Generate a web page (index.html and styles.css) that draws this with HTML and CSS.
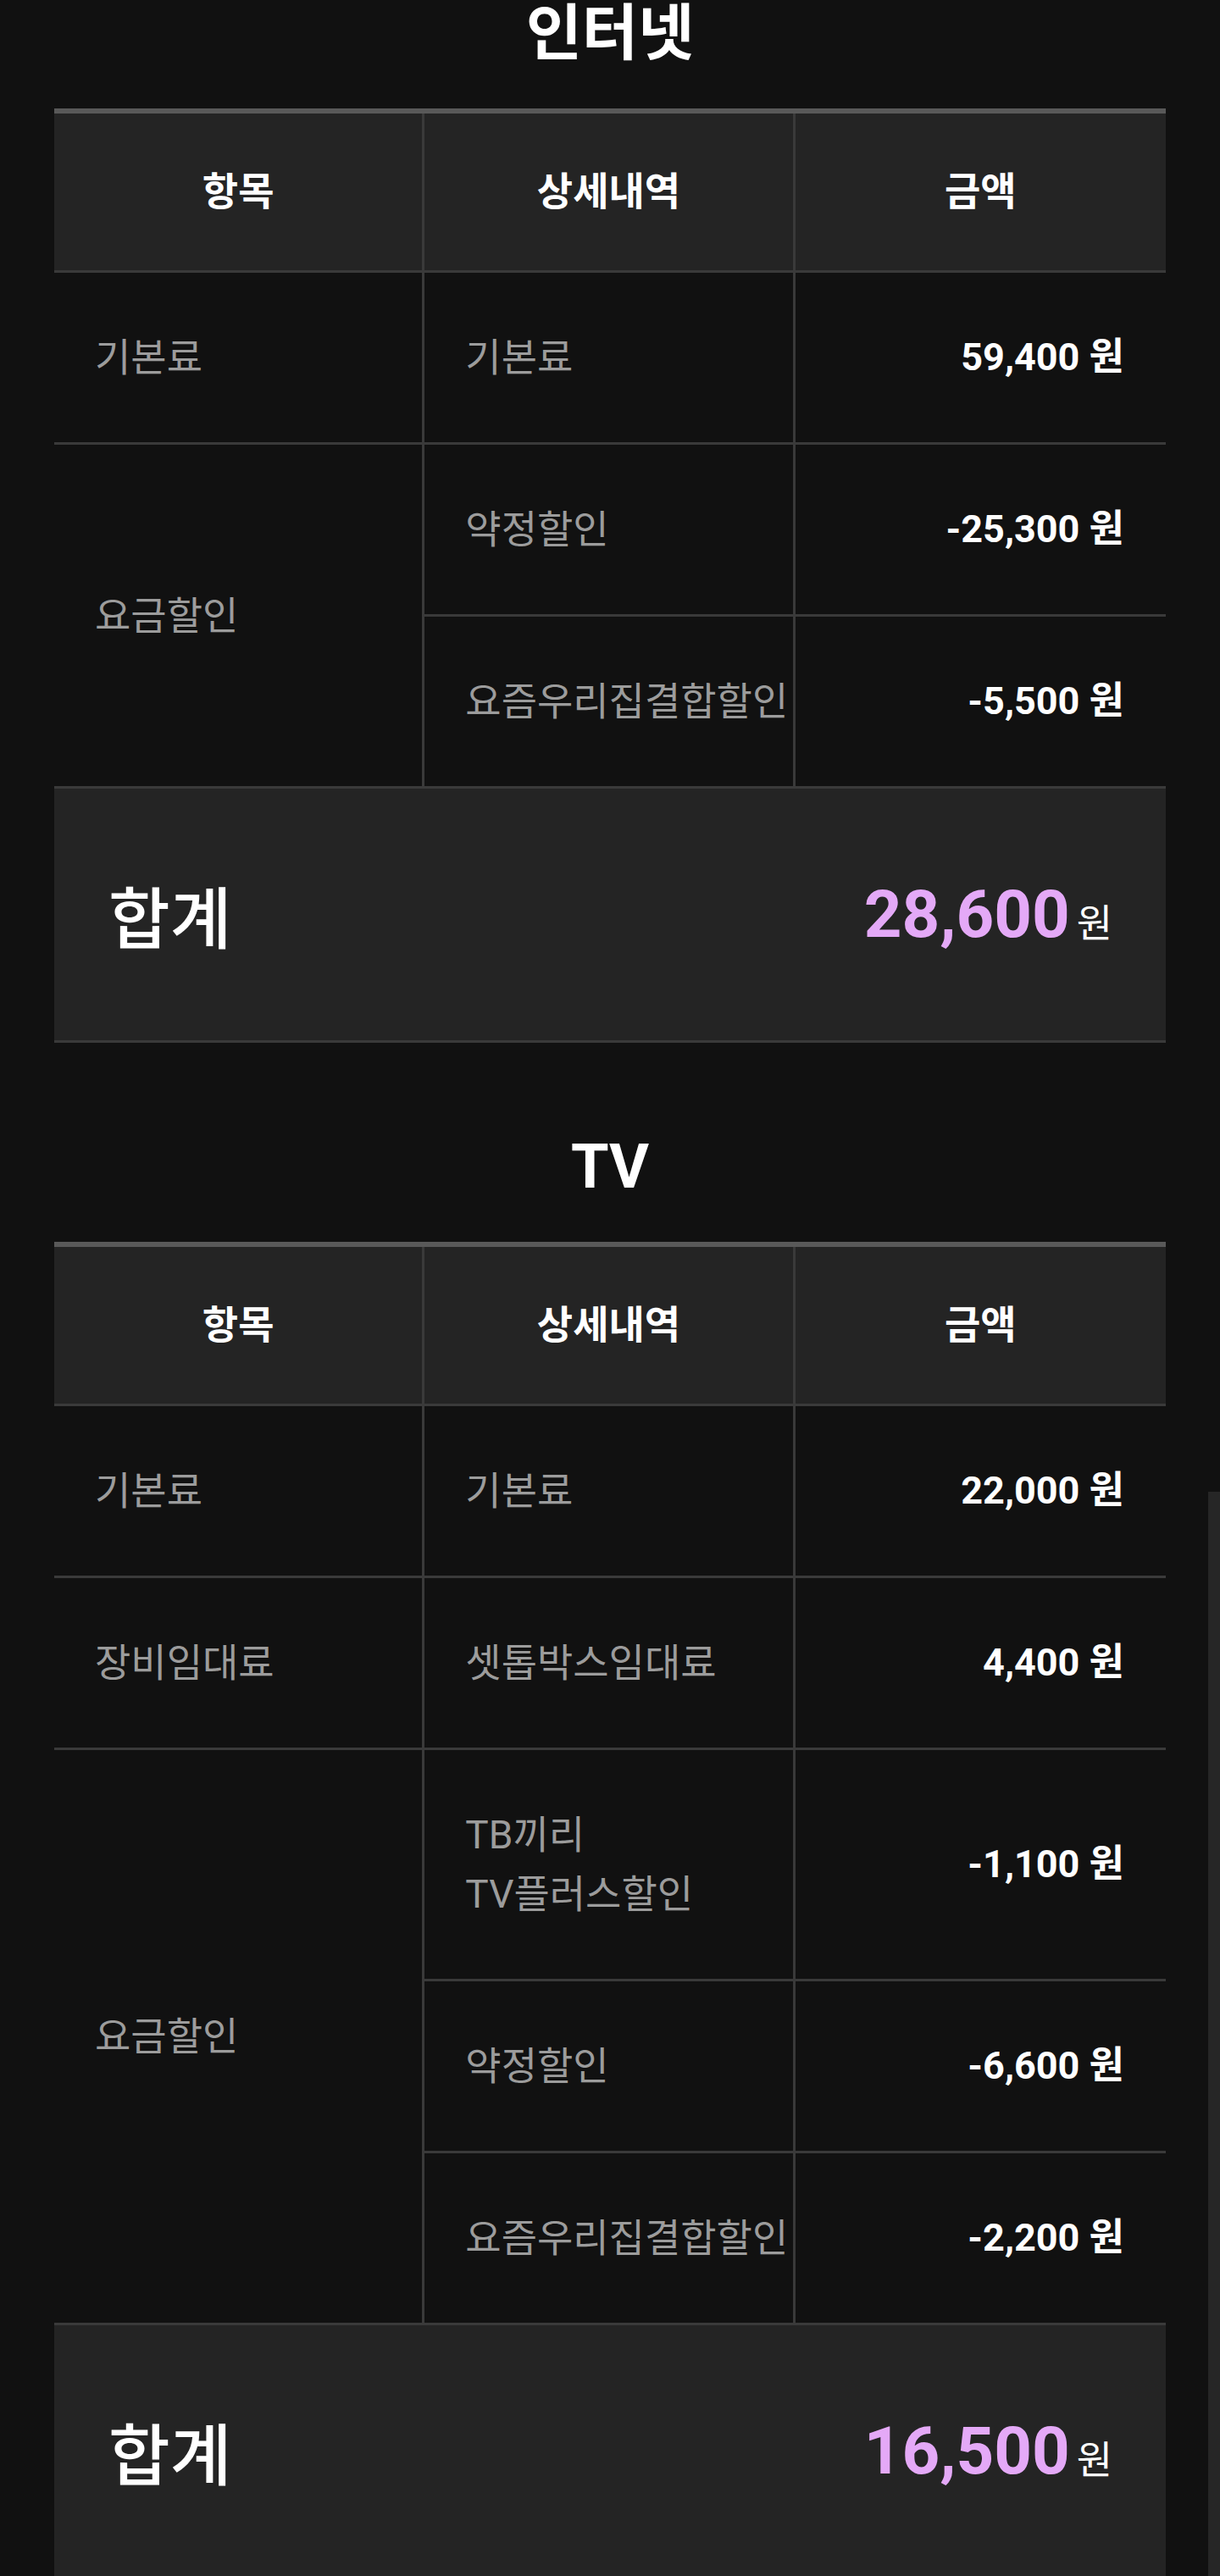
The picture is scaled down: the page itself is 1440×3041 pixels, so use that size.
FILE: index.html
```html
<!DOCTYPE html>
<html lang="ko">
<head>
    <meta charset="UTF-8">
    <meta name="viewport" content="width=device-width, initial-scale=1.0">
    <title>요금 상세내역</title>
    <link rel="stylesheet" href="styles.css">
</head>
<body>
    <div class="page">
        <section class="bill">
            <h2 class="bill-title">인터넷</h2>
            <table class="bill-table">
                <thead>
                    <tr><th>항목</th><th>상세내역</th><th>금액</th></tr>
                </thead>
                <tbody>
                    <tr>
                        <td>기본료</td>
                        <td>기본료</td>
                        <td class="amount">59,400 원</td>
                    </tr>
                    <tr>
                        <td rowspan="2">요금할인</td>
                        <td>약정할인</td>
                        <td class="amount">-25,300 원</td>
                    </tr>
                    <tr>
                        <td>요즘우리집결합할인</td>
                        <td class="amount">-5,500 원</td>
                    </tr>
                </tbody>
            </table>
            <div class="total">
                <span class="total-label">합계</span>
                <span class="total-value"><strong>28,600</strong><span class="won">원</span></span>
            </div>
        </section>

        <section class="bill">
            <h2 class="bill-title">TV</h2>
            <table class="bill-table">
                <thead>
                    <tr><th>항목</th><th>상세내역</th><th>금액</th></tr>
                </thead>
                <tbody>
                    <tr>
                        <td>기본료</td>
                        <td>기본료</td>
                        <td class="amount">22,000 원</td>
                    </tr>
                    <tr>
                        <td>장비임대료</td>
                        <td>셋톱박스임대료</td>
                        <td class="amount">4,400 원</td>
                    </tr>
                    <tr>
                        <td rowspan="3">요금할인</td>
                        <td>TB끼리<br>TV플러스할인</td>
                        <td class="amount">-1,100 원</td>
                    </tr>
                    <tr>
                        <td>약정할인</td>
                        <td class="amount">-6,600 원</td>
                    </tr>
                    <tr>
                        <td>요즘우리집결합할인</td>
                        <td class="amount">-2,200 원</td>
                    </tr>
                </tbody>
            </table>
            <div class="total">
                <span class="total-label">합계</span>
                <span class="total-value"><strong>16,500</strong><span class="won">원</span></span>
            </div>
        </section>
    </div>
    <div class="scroll-thumb"></div>
</body>
</html>
```

FILE: styles.css
```css
html, body {
    margin: 0;
    background: #111111;
    overflow: hidden;
}
body {
    font-family: Roboto, "Noto Sans CJK KR", sans-serif;
    color: #ffffff;
}
.page {
    padding: 4px 64px 0;
}
.bill + .bill {
    margin-top: 111px;
}
.bill-title {
    margin: 0 0 52px;
    font-size: 72px;
    line-height: 72px;
    font-weight: 700;
    text-align: center;
}
.bill-table {
    width: 100%;
    table-layout: fixed;
    border-collapse: separate;
    border-spacing: 0;
    border-top: 6px solid #595959;
}
.bill-table th,
.bill-table td {
    border-right: 3px solid #3a3a3a;
    border-bottom: 3px solid #3a3a3a;
}
.bill-table th:last-child,
.bill-table td.amount {
    border-right: none;
}
.bill-table th {
    background: #242424;
    padding: 57px 10px;
    font-size: 46px;
    line-height: 71px;
    font-weight: 700;
    text-align: center;
}
.bill-table td {
    padding: 65px 0 65px 48px;
    font-size: 46px;
    line-height: 70px;
    color: #9c9c9c;
    white-space: nowrap;
    text-align: left;
    vertical-align: middle;
}
.bill-table td.amount {
    padding: 65px 49px 65px 0;
    font-size: 45px;
    font-weight: 700;
    color: #ffffff;
    text-align: right;
}
.total {
    display: flex;
    justify-content: space-between;
    align-items: center;
    height: 297px;
    padding: 0 63px 0 64px;
    background: #242424;
    border-bottom: 3px solid #3a3a3a;
}
.total-label {
    font-size: 79px;
    font-weight: 500;
}
.total-value strong {
    font-size: 78px;
    font-weight: 700;
    color: #e4a9f7;
}
.won {
    margin-left: 8px;
    font-size: 46px;
}
.scroll-thumb {
    position: fixed;
    right: 0;
    top: 1761px;
    bottom: 0;
    width: 14px;
    background: #262626;
}
```
